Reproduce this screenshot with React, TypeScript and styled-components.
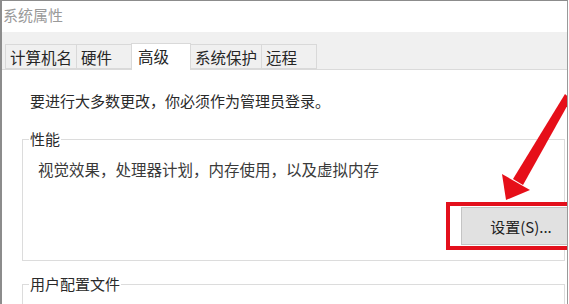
import styled, { createGlobalStyle } from "styled-components";

const GlobalStyle = createGlobalStyle`
  html, body {
    margin: 0;
    padding: 0;
    background: #ffffff;
  }
  body {
    font-family: "Noto Sans CJK SC", "Microsoft YaHei", sans-serif;
  }
`;

const Window = styled.div`
  position: relative;
  width: 568px;
  height: 304px;
  box-sizing: border-box;
  border-top: 1px solid #8c8c8c;
  border-left: 2px solid #8c8c8c;
  border-right: 1px solid #9a9a9a;
  background: #ffffff;
  overflow: hidden;
`;

const TitleBar = styled.div`
  height: 31px;
  display: flex;
  align-items: center;
  padding-left: 1px;
  padding-bottom: 4px;
  box-sizing: border-box;
  font-size: 15px;
  color: #9a9a9a;
`;

const TabStrip = styled.div`
  height: 38px;
  box-sizing: border-box;
  background: #f0f0f0;
  border-bottom: 1px solid #dadada;
  display: flex;
  align-items: flex-end;
  padding-left: 4px;
`;

const Tab = styled.div<{ $active?: boolean }>`
  height: ${(p) => (p.$active ? "27px" : "25px")};
  min-width: ${(p) => (p.$active ? "60px" : "56px")};
  box-sizing: border-box;
  padding: ${(p) => (p.$active ? "0 4px 2px 6px" : "0 4px 0 4px")};
  margin-left: -1px;
  margin-bottom: ${(p) => (p.$active ? "-1px" : "0")};
  display: flex;
  align-items: center;
  background: ${(p) => (p.$active ? "#ffffff" : "#f0f0f0")};
  border: 1px solid #d9d9d9;
  border-bottom: ${(p) => (p.$active ? "none" : "1px solid #d9d9d9")};
  font-size: 15.5px;
  color: #262626;
  position: relative;
  z-index: ${(p) => (p.$active ? 1 : 0)};
`;

const Content = styled.div`
  padding: 21px 0 0 20px;
`;

const Notice = styled.div`
  margin-left: 8px;
  font-size: 15px;
  line-height: 20px;
  color: #2a2a2a;
`;

const Group = styled.fieldset<{ $gap: number }>`
  margin: ${(p) => p.$gap}px 0 0 0;
  width: 543px;
  box-sizing: border-box;
  border: 1px solid #dcdcdc;
  padding: 0 0 10px 15px;
  min-inline-size: 0;
`;

const GroupLabel = styled.legend`
  margin-left: -9px;
  padding: 0 1px;
  font-size: 15px;
  line-height: 20px;
  color: #2a2a2a;
`;

const Description = styled.div`
  margin-top: 10px;
  font-size: 15.5px;
  line-height: 20px;
  color: #3a3a3a;
`;

const ButtonRow = styled.div`
  display: flex;
  justify-content: flex-end;
  margin-top: 23px;
  margin-right: -19px;
`;

const Highlight = styled.div`
  border: 4px solid #e3101c;
  padding: 1px 0 1px 11px;
  background: #ffffff;
`;

const SettingsButton = styled.button`
  width: 118px;
  height: 38px;
  box-sizing: border-box;
  background: #e1e1e1;
  border: 1px solid #c4c4c4;
  font-family: inherit;
  font-size: 15px;
  color: #222222;
  padding: 0 0 0 2px;
`;

const ArrowLayer = styled.svg`
  position: absolute;
  left: -2px;
  top: -1px;
  pointer-events: none;
`;

const tabs = ["计算机名", "硬件", "高级", "系统保护", "远程"];

const App = () => {
  return (
    <>
      <GlobalStyle />
      <Window>
        <TitleBar>系统属性</TitleBar>
        <TabStrip>
          {tabs.map((t) => (
            <Tab key={t} $active={t === "高级"}>
              {t}
            </Tab>
          ))}
        </TabStrip>
        <Content>
          <Notice>要进行大多数更改，你必须作为管理员登录。</Notice>
          <Group $gap={18}>
            <GroupLabel>性能</GroupLabel>
            <Description>视觉效果，处理器计划，内存使用，以及虚拟内存</Description>
            <ButtonRow>
              <Highlight>
                <SettingsButton>设置(S)...</SettingsButton>
              </Highlight>
            </ButtonRow>
          </Group>
          <Group $gap={13}>
            <GroupLabel>用户配置文件</GroupLabel>
          </Group>
        </Content>
        <ArrowLayer width="569" height="304" viewBox="0 0 569 304">
          <polygon points="565,94 571,99 523,185 513,179" fill="#e60f19" />
          <polygon points="502,174 530,190 506,200" fill="#e60f19" />
        </ArrowLayer>
      </Window>
    </>
  );
};

export default App;
